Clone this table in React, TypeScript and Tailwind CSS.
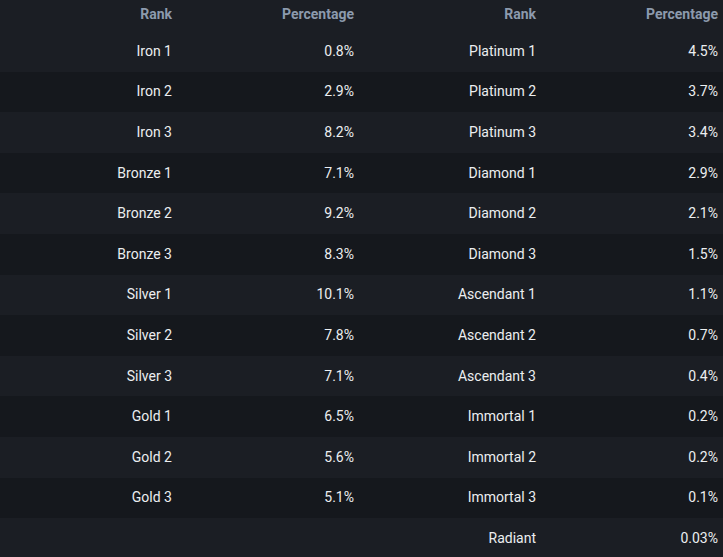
const left: [string, string][] = [
  ["Iron 1", "0.8%"],
  ["Iron 2", "2.9%"],
  ["Iron 3", "8.2%"],
  ["Bronze 1", "7.1%"],
  ["Bronze 2", "9.2%"],
  ["Bronze 3", "8.3%"],
  ["Silver 1", "10.1%"],
  ["Silver 2", "7.8%"],
  ["Silver 3", "7.1%"],
  ["Gold 1", "6.5%"],
  ["Gold 2", "5.6%"],
  ["Gold 3", "5.1%"],
];

const right: [string, string][] = [
  ["Platinum 1", "4.5%"],
  ["Platinum 2", "3.7%"],
  ["Platinum 3", "3.4%"],
  ["Diamond 1", "2.9%"],
  ["Diamond 2", "2.1%"],
  ["Diamond 3", "1.5%"],
  ["Ascendant 1", "1.1%"],
  ["Ascendant 2", "0.7%"],
  ["Ascendant 3", "0.4%"],
  ["Immortal 1", "0.2%"],
  ["Immortal 2", "0.2%"],
  ["Immortal 3", "0.1%"],
  ["Radiant", "0.03%"],
];

export default function App() {
  const rows = right.map((r, i) => ({ l: left[i], r }));

  return (
    <div
      className="min-h-screen w-[723px] bg-[#1b1e24] text-[14px] text-[#eceef0]"
      style={{ fontFamily: "Roboto, 'Liberation Sans', sans-serif" }}
    >
      {/* header */}
      <div className="grid h-[31px] grid-cols-[180px_179px_185px_179px] items-center pb-[3px] font-bold text-[#8c9aad]">
        <div className="pr-2 text-right">Rank</div>
        <div className="pr-[5px] text-right">Percentage</div>
        <div className="pr-2 text-right">Rank</div>
        <div className="pr-[5px] text-right">Percentage</div>
      </div>

      {rows.map((row, i) => (
        <div
          key={row.r[0]}
          className={`grid h-[40.6px] grid-cols-[180px_179px_185px_179px] items-center ${
            i % 2 === 1 ? "bg-[#15181d]" : "bg-[#1b1e24]"
          }`}
        >
          <div className="pr-2 text-right">{row.l ? row.l[0] : ""}</div>
          <div className="pr-[5px] text-right">{row.l ? row.l[1] : ""}</div>
          <div className="pr-2 text-right">{row.r[0]}</div>
          <div className="pr-[5px] text-right">{row.r[1]}</div>
        </div>
      ))}
    </div>
  );
}
